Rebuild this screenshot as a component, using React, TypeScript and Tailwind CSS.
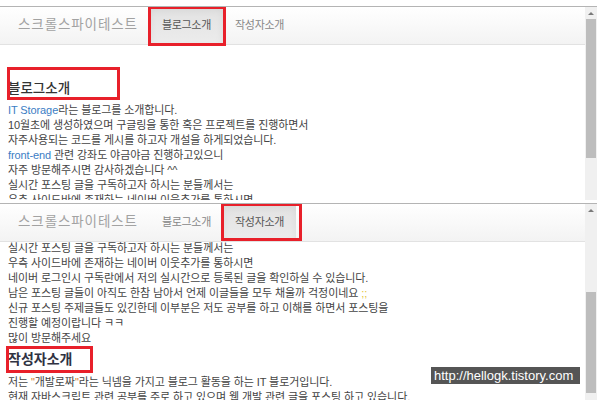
const BLUE = 'text-[#3b7dc4]';

type NavBarProps = {
  active: 'blog' | 'author';
};

const NavBar = ({ active }: NavBarProps) => {
  return (
    <div className="flex h-[38px] shrink-0 items-stretch border-b border-[#e2e2e2] bg-gradient-to-b from-white to-[#f3f3f3]">
      <span className="flex items-center pr-[12px] pl-[18px] text-[13.5px] tracking-[0.9px] text-[#a2a2a2]">
        스크롤스파이테스트
      </span>
      <NavItem label="블로그소개" on={active === 'blog'} box="-top-[1px] -bottom-[2px] -left-[2px] -right-[3px]" />
      <NavItem label="작성자소개" on={active === 'author'} box="-top-[1px] bottom-0 -left-[2px] -right-[6px]" />
    </div>
  );
};

type NavItemProps = {
  label: string;
  on: boolean;
  box: string;
};

const NavItem = ({ label, on, box }: NavItemProps) => {
  return (
    <span
      className={
        on
          ? 'relative flex items-center bg-gradient-to-b from-[#e2e2e2] to-[#ececec] px-[12px] text-[11px] tracking-[-0.3px] text-[#555] shadow-[inset_0_3px_9px_rgba(0,0,0,0.06)]'
          : 'relative flex items-center px-[12px] text-[11px] tracking-[-0.3px] text-[#888]'
      }
    >
      {label}
      {on && <span className={`absolute border-[3px] border-[#e8202a] ${box}`} />}
    </span>
  );
};

type ScrollBarProps = {
  gap: string;
  thumb: string;
};

const ScrollBar = ({ gap, thumb }: ScrollBarProps) => {
  return (
    <div className="flex w-[12px] shrink-0 flex-col bg-[#f0f0f0]">
      <div className="flex h-[12px] shrink-0 items-center justify-center">
        <span className="h-0 w-0 border-x-[3px] border-b-[3px] border-x-transparent border-b-[#7a7a7a]" />
      </div>
      <div className={gap} />
      <div className={`mx-[1px] shrink-0 bg-[#bdbdbd] ${thumb}`} />
    </div>
  );
};

type PanelProps = {
  height: string;
  active: 'blog' | 'author';
  gap: string;
  thumb: string;
  children: React.ReactNode;
};

const Panel = ({ height, active, gap, thumb, children }: PanelProps) => {
  return (
    <div className={`flex w-[597px] overflow-hidden border-t border-[#b4b4b4] ${height}`}>
      <div className="flex w-[585px] flex-col overflow-hidden">
        <NavBar active={active} />
        <div className="px-[8px] text-[11px] leading-[15px] tracking-[-0.1px] text-[#444]">
          {children}
        </div>
      </div>
      <ScrollBar gap={gap} thumb={thumb} />
    </div>
  );
};

const App = () => {
  return (
    <div className="relative h-[400px] w-[600px] overflow-hidden bg-white font-['Liberation_Sans','Noto_Sans_CJK_KR',sans-serif]">
      <div className="h-[6px]" />
      <Panel height="h-[194px]" active="blog" gap="h-0" thumb="h-[139px]">
        <div className="relative -ml-px mt-[22px] flex h-[33px] w-[113px] items-end pb-[2px] pl-[1px]">
          <span className="text-[13.5px] leading-[18px] font-medium tracking-normal text-[#333]">블로그소개</span>
          <span className="absolute inset-0 border-[3px] border-[#e8202a]" />
        </div>
        <div className="mt-[3px]">
          <p>
            <span className={BLUE}>IT Storage</span>라는 블로그를 소개합니다.
          </p>
          <p>10월초에 생성하였으며 구글링을 통한 혹은 프로젝트를 진행하면서</p>
          <p>자주사용되는 코드를 게시를 하고자 개설을 하게되었습니다.</p>
          <p>
            <span className={BLUE}>front-end</span> 관련 강좌도 야금야금 진행하고있으니
          </p>
          <p>자주 방문해주시면 감사하겠습니다 ^^</p>
          <p>실시간 포스팅 글을 구독하고자 하시는 분들께서는</p>
          <p>우측 사이드바에 존재하는 네이버 이웃추가를 통하시면</p>
        </div>
      </Panel>
      <div className="h-[3px]" />
      <Panel height="h-[197px]" active="author" gap="h-[76px]" thumb="h-[101px]">
        <div className="-mt-px">
          <p>실시간 포스팅 글을 구독하고자 하시는 분들께서는</p>
          <p>우측 사이드바에 존재하는 네이버 이웃추가를 통하시면</p>
          <p>네이버 로그인시 구독란에서 저의 실시간으로 등록된 글을 확인하실 수 있습니다.</p>
          <p>
            남은 포스팅 글들이 아직도 한참 남아서 언제 이글들을 모두 채울까 걱정이네요{' '}
            <span className="text-[#e2c23a]">;;</span>
          </p>
          <p>신규 포스팅 주제글들도 있긴한데 이부분은 저도 공부를 하고 이해를 하면서 포스팅을</p>
          <p>진행할 예정이랍니다 ㅋㅋ</p>
          <p>많이 방문해주세요</p>
        </div>
        <div className="relative -ml-[2px] h-[29px] w-[87px] pt-[4px] pl-[2px]">
          <span className="text-[14px] leading-[18px] font-bold tracking-normal text-[#2f3242]">작성자소개</span>
          <span className="absolute inset-x-0 top-0 h-[27px] border-[3px] border-[#e8202a]" />
        </div>
        <p>
          저는 <span className="text-[#d9822b]">"</span>개발로짜<span className="text-[#d9822b]">"</span>라는 닉넴을
          가지고 블로그 활동을 하는 IT 블로거입니다.
        </p>
        <p>현재 자바스크립트 관련 공부를 주로 하고 있으며 웹 개발 관련 글을 포스팅 하고 있습니다.</p>
      </Panel>
      <div className="absolute top-[367px] left-[431px] flex h-[17px] w-[149px] items-center bg-[#555] pl-[3px] font-['Liberation_Sans',sans-serif] text-[13px] text-white">
        http://hellogk.tistory.com
      </div>
    </div>
  );
};

export default App;
